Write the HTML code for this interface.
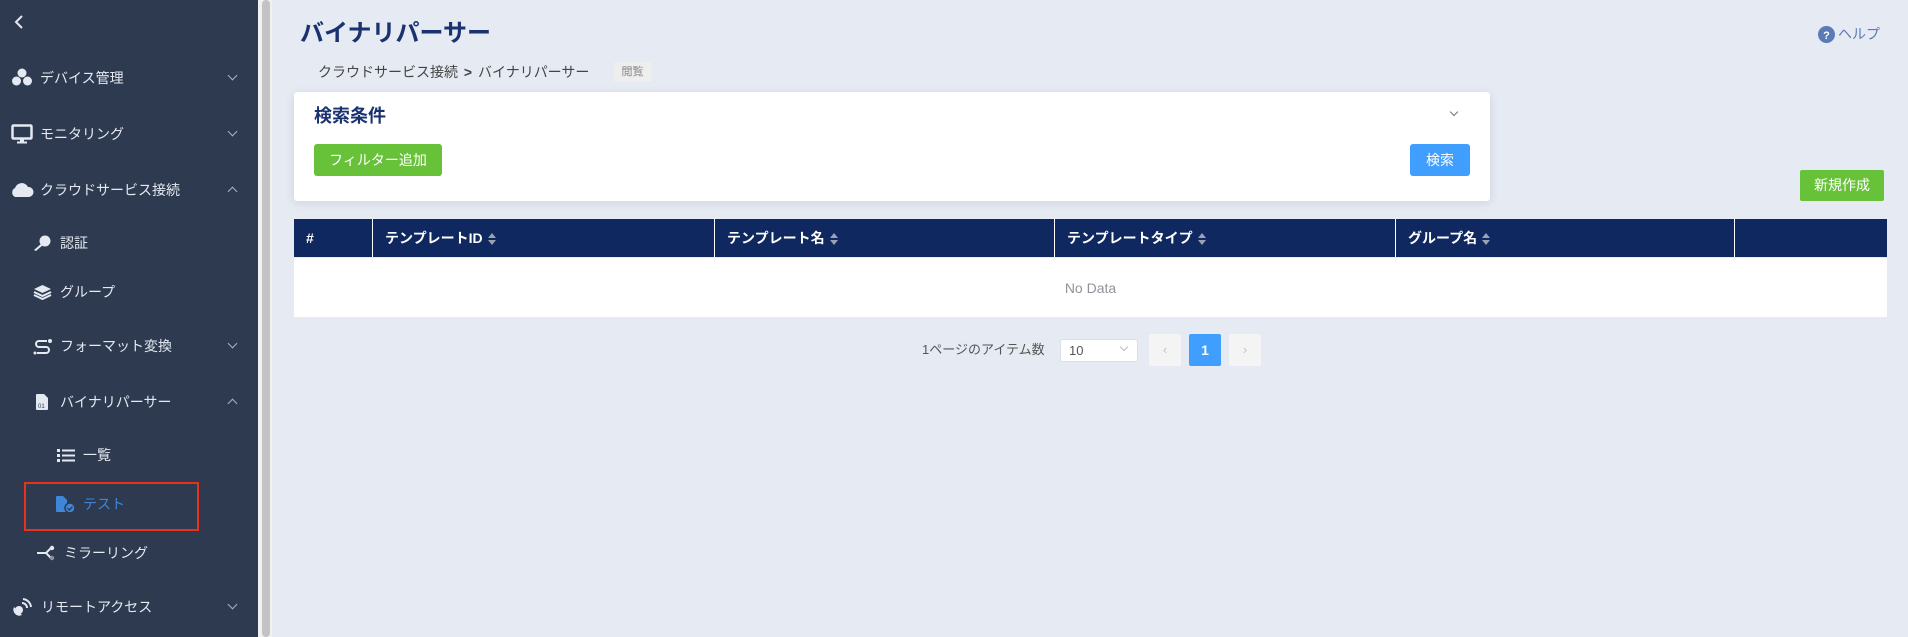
<!DOCTYPE html>
<html><head><meta charset="utf-8"><style>
*{margin:0;padding:0;box-sizing:border-box}
body{width:1908px;height:637px;overflow:hidden;background:#e6eaf3;font-family:"Liberation Sans","Noto Sans CJK JP",sans-serif;position:relative}
.a{position:absolute;white-space:nowrap}
#side{position:absolute;left:0;top:0;width:258px;height:637px;background:#2e3a4f}
.si{position:absolute;color:#e4e9f2;font-size:14px;line-height:18px}
.ch{position:absolute;left:229px;width:7px;height:7px;border-right:1px solid #aab3c2;border-bottom:1px solid #aab3c2}
.dn{transform:rotate(45deg)}.up{transform:rotate(-135deg)}
.th{position:absolute;top:219px;height:38px;color:#fff;font-weight:bold;font-size:14px;line-height:38px;padding-left:12px;border-left:1px solid #fff}
.sort{display:inline-block;vertical-align:middle;margin-left:5px;width:8px;height:12px;position:relative}
.sort:before,.sort:after{content:"";position:absolute;left:0;border-left:4px solid transparent;border-right:4px solid transparent}
.sort:before{top:0;border-bottom:5px solid #9aa3b3}
.sort:after{bottom:0;border-top:5px solid #9aa3b3}
</style></head><body>
<div id="side">
 <svg class="a" style="left:13px;top:15px" width="12" height="14"><path d="M9 1 L3 7 L9 13" stroke="#e4e9f2" stroke-width="2" fill="none"/></svg>

 <svg class="a" style="left:11px;top:68px" width="22" height="19" viewBox="0 0 22 19"><circle cx="11" cy="5" r="4.5" fill="#e4e9f2"/><circle cx="5.5" cy="13" r="4.5" fill="#e4e9f2"/><circle cx="16.5" cy="13" r="4.5" fill="#e4e9f2"/></svg>
 <div class="si" style="left:40px;top:69px">デバイス管理</div><div class="ch dn" style="top:72px"></div>

 <svg class="a" style="left:11px;top:124px" width="22" height="20"><rect x="1.5" y="1.5" width="19" height="13" rx="1" stroke="#e4e9f2" stroke-width="2.5" fill="none"/><rect x="9" y="15" width="4" height="3" fill="#e4e9f2"/><rect x="6" y="17.5" width="10" height="2" fill="#e4e9f2"/></svg>
 <div class="si" style="left:40px;top:125px">モニタリング</div><div class="ch dn" style="top:128px"></div>

 <svg class="a" style="left:10px;top:182px" width="24" height="16"><path d="M5 15 A5 5 0 0 1 5 6 A7 7 0 0 1 18 5 A5 5 0 0 1 19 15 Z" fill="#e4e9f2"/></svg>
 <div class="si" style="left:40px;top:181px">クラウドサービス接続</div><div class="ch up" style="top:188px"></div>

 <svg class="a" style="left:32px;top:235px" width="20" height="17"><circle cx="13" cy="6" r="5.5" fill="#e4e9f2"/><path d="M10 8 L2 15 L4 16 L11 10Z" fill="#e4e9f2"/></svg>
 <div class="si" style="left:60px;top:234px">認証</div>

 <svg class="a" style="left:33px;top:284px" width="19" height="16"><path d="M9.5 1 L18 5 L9.5 9 L1 5Z" fill="#e4e9f2"/><path d="M1 8 L9.5 12 L18 8 M1 11 L9.5 15 L18 11" stroke="#e4e9f2" stroke-width="2" fill="none"/></svg>
 <div class="si" style="left:60px;top:283px">グループ</div>

 <svg class="a" style="left:33px;top:338px" width="19" height="17"><path d="M14 3 H6 A3 3 0 0 0 6 9 H13 A3 3 0 0 1 13 15 H4" stroke="#e4e9f2" stroke-width="2" fill="none"/><circle cx="17" cy="3" r="2" fill="#e4e9f2"/><circle cx="2" cy="15" r="1.5" fill="#e4e9f2"/></svg>
 <div class="si" style="left:60px;top:337px">フォーマット変換</div><div class="ch dn" style="top:340px"></div>

 <svg class="a" style="left:35px;top:393px" width="14" height="18"><path d="M1 2 Q1 1 2 1 H9 L13 5 V16 Q13 17 12 17 H2 Q1 17 1 16Z" fill="#e4e9f2"/><text x="3" y="15" font-size="6" fill="#2e3a4f" font-family="Liberation Sans">01</text></svg>
 <div class="si" style="left:60px;top:393px">バイナリパーサー</div><div class="ch up" style="top:400px"></div>

 <svg class="a" style="left:57px;top:448px" width="18" height="15"><g fill="#e4e9f2"><rect x="0" y="1" width="3" height="3"/><rect x="0" y="6" width="3" height="3"/><rect x="0" y="11" width="3" height="3"/><rect x="5" y="1.5" width="13" height="2"/><rect x="5" y="6.5" width="13" height="2"/><rect x="5" y="11.5" width="13" height="2"/></g></svg>
 <div class="si" style="left:83px;top:446px">一覧</div>

 <div class="a" style="left:24px;top:482px;width:175px;height:49px;border:2px solid #e8321c"></div>
 <svg class="a" style="left:55px;top:495px" width="22" height="18"><path d="M1 2 Q1 1 2 1 H8 L12 5 V17 H2 Q1 17 1 16Z" fill="#3f86d8"/><circle cx="15" cy="13" r="5" fill="#3f86d8" stroke="#2e3a4f" stroke-width="1.5"/><path d="M12.5 13 L14.5 15 L17.5 11.5" stroke="#2e3a4f" stroke-width="1.3" fill="none"/></svg>
 <div class="si" style="left:83px;top:495px;color:#3f86d8">テスト</div>

 <svg class="a" style="left:36px;top:545px" width="20" height="16"><path d="M1 8 H10 L15 3 M10 8 L15 13" stroke="#e4e9f2" stroke-width="2" fill="none"/><circle cx="16" cy="3" r="2.2" fill="#e4e9f2"/><circle cx="16" cy="13" r="2.2" fill="#8a93a3"/></svg>
 <div class="si" style="left:64px;top:544px">ミラーリング</div>

 <svg class="a" style="left:12px;top:598px" width="20" height="19"><path d="M2 9 L10 17 A6 6 0 0 1 2 9Z" fill="#e4e9f2"/><circle cx="7" cy="12" r="4" fill="#e4e9f2"/><path d="M10 5 A5 5 0 0 1 15 10 M11 1 A9 9 0 0 1 19 9" stroke="#e4e9f2" stroke-width="2" fill="none"/></svg>
 <div class="si" style="left:41px;top:598px">リモートアクセス</div><div class="ch dn" style="top:601px"></div>
</div>
<div class="a" style="left:258px;top:0;width:14px;height:637px;background:#f1f1f1"></div>
<div class="a" style="left:262px;top:0;width:8px;height:637px;background:#c3c3c3;border-radius:4px"></div>

<div class="a" style="left:300px;top:19px;font-size:24px;font-weight:bold;color:#1a3370;line-height:30px">バイナリパーサー</div>
<div class="a" style="left:318px;top:63px;font-size:14px;color:#444;line-height:18px">クラウドサービス接続 <span style="font-weight:bold;margin:0 2px">&gt;</span> バイナリパーサー</div>
<div class="a" style="left:614px;top:62px;width:37px;height:20px;background:#eeeeee;color:#888;font-size:11px;line-height:20px;text-align:center;border-radius:2px">閲覧</div>

<svg class="a" style="left:1818px;top:26px" width="17" height="17"><circle cx="8.5" cy="8.5" r="8.5" fill="#5b7ab8"/><text x="8.5" y="13" font-size="11" font-weight="bold" fill="#fff" text-anchor="middle" font-family="Liberation Sans">?</text></svg>
<div class="a" style="left:1838px;top:25px;font-size:14px;color:#5b7ab8;line-height:18px">ヘルプ</div>

<div class="a" style="left:294px;top:92px;width:1196px;height:109px;background:#fff;border-radius:3px;box-shadow:0 2px 10px rgba(0,0,0,.1)"></div>
<div class="a" style="left:314px;top:104px;font-size:18px;font-weight:bold;color:#1a3370;line-height:24px">検索条件</div>
<div class="a" style="left:1451px;top:109px;width:6px;height:6px;border-right:1px solid #777;border-bottom:1px solid #777;transform:rotate(45deg)"></div>
<div class="a" style="left:314px;top:144px;width:128px;height:32px;background:#67c23a;border-radius:3px;color:#fff;font-size:14px;line-height:32px;text-align:center">フィルター追加</div>
<div class="a" style="left:1410px;top:144px;width:60px;height:32px;background:#409eff;border-radius:3px;color:#fff;font-size:14px;line-height:32px;text-align:center">検索</div>
<div class="a" style="left:1800px;top:170px;width:84px;height:31px;background:#67c23a;border-radius:2px;color:#fff;font-size:14px;line-height:31px;text-align:center">新規作成</div>

<div class="a" style="left:294px;top:219px;width:1593px;height:38px;background:#0f2860"></div>
<div class="th" style="left:294px;width:78px;border-left:none">#</div>
<div class="th" style="left:372px;width:342px">テンプレートID<span class="sort"></span></div>
<div class="th" style="left:714px;width:340px">テンプレート名<span class="sort"></span></div>
<div class="th" style="left:1054px;width:341px">テンプレートタイプ<span class="sort"></span></div>
<div class="th" style="left:1395px;width:339px">グループ名<span class="sort"></span></div>
<div class="th" style="left:1734px;width:153px"></div>
<div class="a" style="left:294px;top:257px;width:1593px;height:60px;background:#fff;border-top:1px solid #e8ebf0;color:#909399;font-size:14px;line-height:60px;text-align:center">No Data</div>

<div class="a" style="left:922px;top:341px;font-size:13px;color:#555;line-height:18px">1ページのアイテム数</div>
<div class="a" style="left:1060px;top:339px;width:78px;height:23px;background:#fff;border:1px solid #dcdfe6;border-radius:3px;font-size:13px;color:#555;line-height:21px;padding-left:8px">10</div>
<div class="a" style="left:1121px;top:344px;width:6px;height:6px;border-right:1px solid #bbb;border-bottom:1px solid #bbb;transform:rotate(45deg)"></div>
<div class="a" style="left:1149px;top:334px;width:32px;height:32px;background:#f4f4f5;border-radius:2px;color:#c0c4cc;font-size:13px;line-height:32px;text-align:center">&lsaquo;</div>
<div class="a" style="left:1189px;top:334px;width:32px;height:32px;background:#409eff;border-radius:2px;color:#fff;font-weight:bold;font-size:14px;line-height:32px;text-align:center">1</div>
<div class="a" style="left:1229px;top:334px;width:32px;height:32px;background:#f4f4f5;border-radius:2px;color:#c0c4cc;font-size:13px;line-height:32px;text-align:center">&rsaquo;</div>
</body></html>
